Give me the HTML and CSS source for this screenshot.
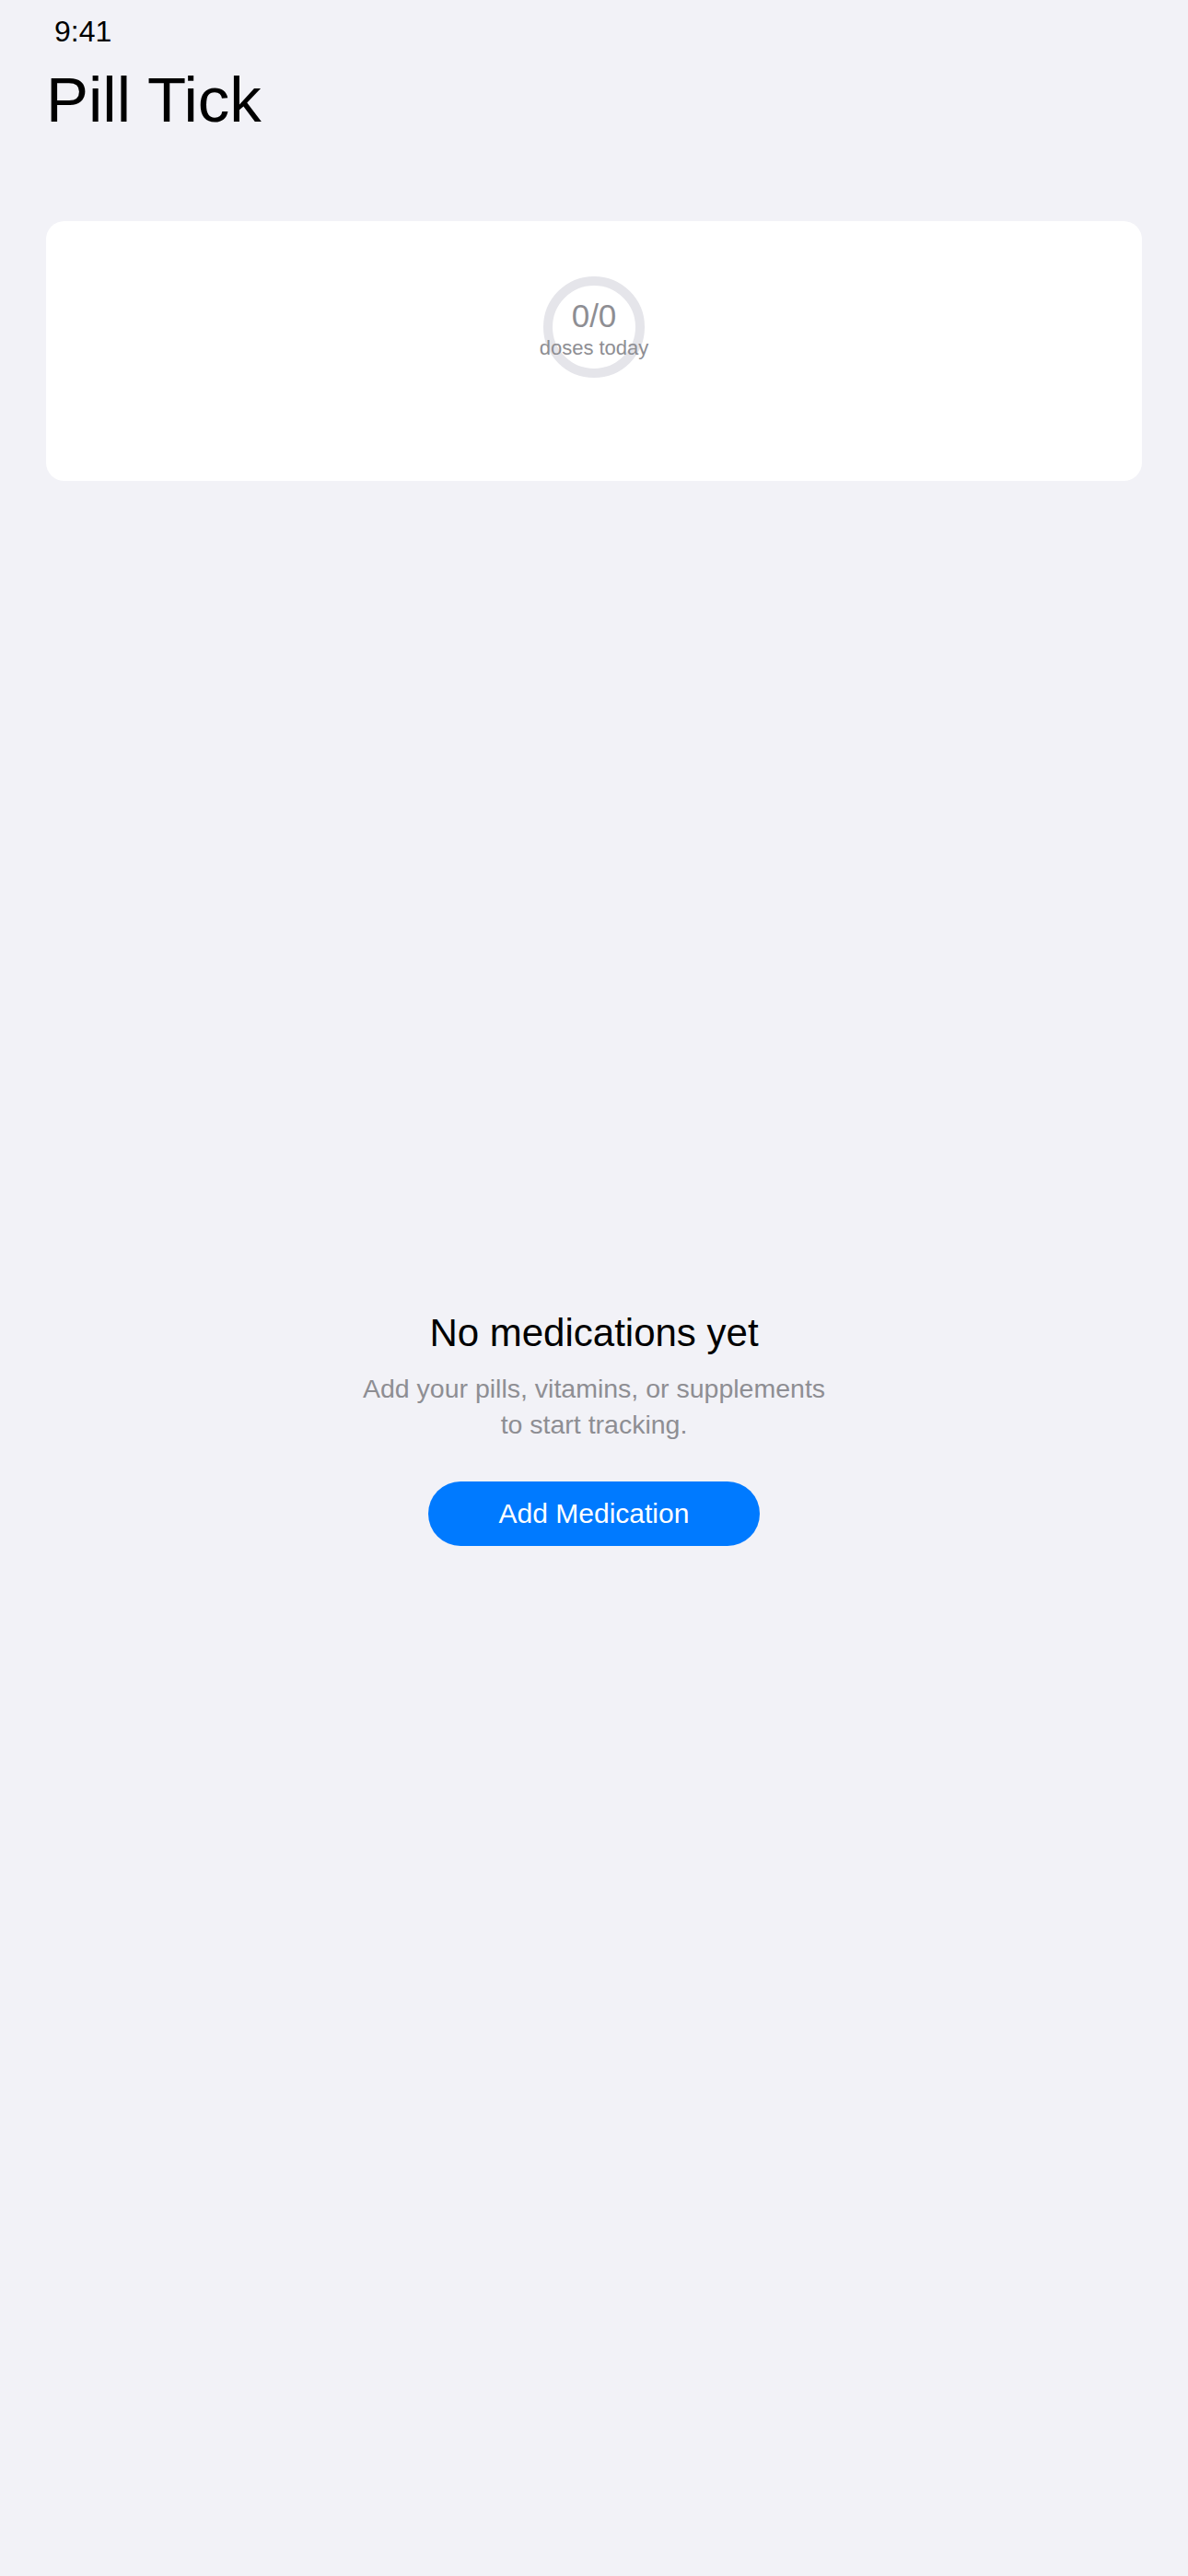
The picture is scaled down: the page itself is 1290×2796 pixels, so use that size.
FILE: index.html
```html
<!DOCTYPE html>
<html>
<head>
<meta charset="utf-8">
<title>Pill Tick</title>
<link rel="stylesheet" href="styles.css">
</head>
<body>
<div class="screen">
    <div class="status_bar">9:41</div>
    <h1 class="title">Pill Tick</h1>

    <div class="summary_card">
        <div class="ring">
            <div class="ring_count">0/0</div>
            <div class="ring_label">doses today</div>
        </div>
    </div>

    <div class="empty_state">
        <h2 class="empty_title">No medications yet</h2>
        <p class="empty_text">Add your pills, vitamins, or supplements to start tracking.</p>
        <button class="add_btn">Add Medication</button>
    </div>
</div>
</body>
</html>
```

FILE: styles.css
```css
body {
    margin: 0;
    background-color: #f2f2f7;
    font-family: "Liberation Sans", Arial, sans-serif;
}
.screen {
    width: 1290px;
    min-height: 2796px;
    display: flex;
    flex-direction: column;
}
.status_bar {
    padding: 16px 0 0 59px;
    font-size: 32px;
    line-height: 37px;
    color: #000;
}
.title {
    margin: 16px 0 0 50px;
    font-size: 69px;
    line-height: 80px;
    font-weight: normal;
    color: #000;
}
.summary_card {
    margin: 91px 50px 0 50px;
    height: 282px;
    box-sizing: border-box;
    padding-top: 60px;
    background-color: #fff;
    border-radius: 20px;
    display: flex;
    justify-content: center;
    align-items: flex-start;
}
.ring {
    width: 110px;
    height: 110px;
    box-sizing: border-box;
    border: 10px solid #e5e5ea;
    border-radius: 50%;
    padding-top: 6px;
    display: flex;
    flex-direction: column;
    justify-content: center;
    align-items: center;
    white-space: nowrap;
}
.ring_count {
    font-size: 35px;
    line-height: 40px;
    color: #8e8e93;
}
.ring_label {
    font-size: 22px;
    line-height: 30px;
    color: #8e8e93;
}
.empty_state {
    margin-top: 900px;
    display: flex;
    flex-direction: column;
    align-items: center;
    text-align: center;
}
.empty_title {
    margin: 0;
    font-size: 42px;
    line-height: 50px;
    font-weight: normal;
    color: #000;
}
.empty_text {
    margin: 16px 0 0 0;
    max-width: 515px;
    font-size: 28.5px;
    line-height: 39px;
    color: #8e8e93;
}
.add_btn {
    margin-top: 42px;
    width: 360px;
    height: 70px;
    border: none;
    border-radius: 35px;
    background-color: #007aff;
    color: #fff;
    font-family: "Liberation Sans", Arial, sans-serif;
    font-size: 30px;
    line-height: 70px;
    padding: 0;
    cursor: pointer;
}
```
